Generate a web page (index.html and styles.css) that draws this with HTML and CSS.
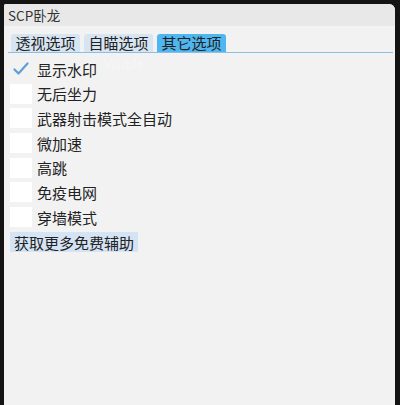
FILE: index.html
```html
<!DOCTYPE html>
<html lang="zh-CN">
<head>
    <meta charset="UTF-8">
    <title>SCP卧龙</title>
    <link rel="stylesheet" href="styles.css">
</head>
<body>
    <div class="window">
        <div class="titlebar">SCP卧龙</div>

        <div class="tabs">
            <span class="tab">透视选项</span>
            <span class="tab">自瞄选项</span>
            <span class="tab active">其它选项</span>
        </div>

        <div class="panel">
            <span class="ghost">Visible</span>
            <label class="row">
                <span class="box checked">
                    <svg width="16" height="14" viewBox="0 0 16 14"><path d="M1.5 7.5 L5.5 11.5 L14.5 1.5" fill="none" stroke="#5e9fd8" stroke-width="2.2" stroke-linecap="round" stroke-linejoin="round"/></svg>
                </span>
                显示水印
            </label>
            <label class="row"><span class="box"></span>无后坐力</label>
            <label class="row"><span class="box"></span>武器射击模式全自动</label>
            <label class="row"><span class="box"></span>微加速</label>
            <label class="row"><span class="box"></span>高跳</label>
            <label class="row"><span class="box"></span>免疫电网</label>
            <label class="row"><span class="box"></span>穿墙模式</label>
            <button class="more">获取更多免费辅助</button>
        </div>
    </div>
</body>
</html>
```

FILE: styles.css
```css
body {
    margin: 0;
    background: #141414;
    font-family: "Noto Sans CJK SC", "Liberation Sans", sans-serif;
    color: #222;
    height: 405px;
    overflow: hidden;
}
.window {
    margin: 4px 5px 0 4px;
    height: 401px;
    background: #f2f2f2;
    border-top-right-radius: 6px;
    border-top-left-radius: 2px;
    overflow: hidden;
}
.titlebar {
    height: 22px;
    line-height: 22px;
    background: #e8e8e8;
    padding-left: 4px;
    font-size: 13.5px;
    color: #333;
}
.tabs {
    display: flex;
    gap: 4px;
    margin: 8px 2px 0 4px;
    padding-left: 3px;
    border-bottom: 1px solid #8cbde3;
    height: 18px;
}
.tab {
    width: 69px;
    height: 18px;
    line-height: 18px;
    text-align: center;
    font-size: 15px;
    background: #d7e5f3;
    border-radius: 3px 3px 0 0;
    color: #222;
}
.tab.active {
    background: #4fb6ef;
}
.panel {
    position: relative;
    padding: 6px 0 0 6px;
}
.ghost {
    position: absolute;
    left: 100px;
    top: 1px;
    font-size: 13px;
    color: #f7f7f7;
}
.row {
    display: flex;
    align-items: center;
    gap: 5px;
    height: 20px;
    margin-bottom: 4.7px;
    font-size: 15px;
    color: #222;
}
.box {
    width: 22px;
    height: 20px;
    background: #fff;
    display: flex;
    align-items: center;
    justify-content: center;
}
.box.checked {
    background: none;
}
.more {
    display: block;
    margin-top: 0;
    padding: 0 4px;
    height: 20px;
    border: none;
    background: #d5e4f4;
    font-family: inherit;
    font-size: 15px;
    color: #222;
}
```
